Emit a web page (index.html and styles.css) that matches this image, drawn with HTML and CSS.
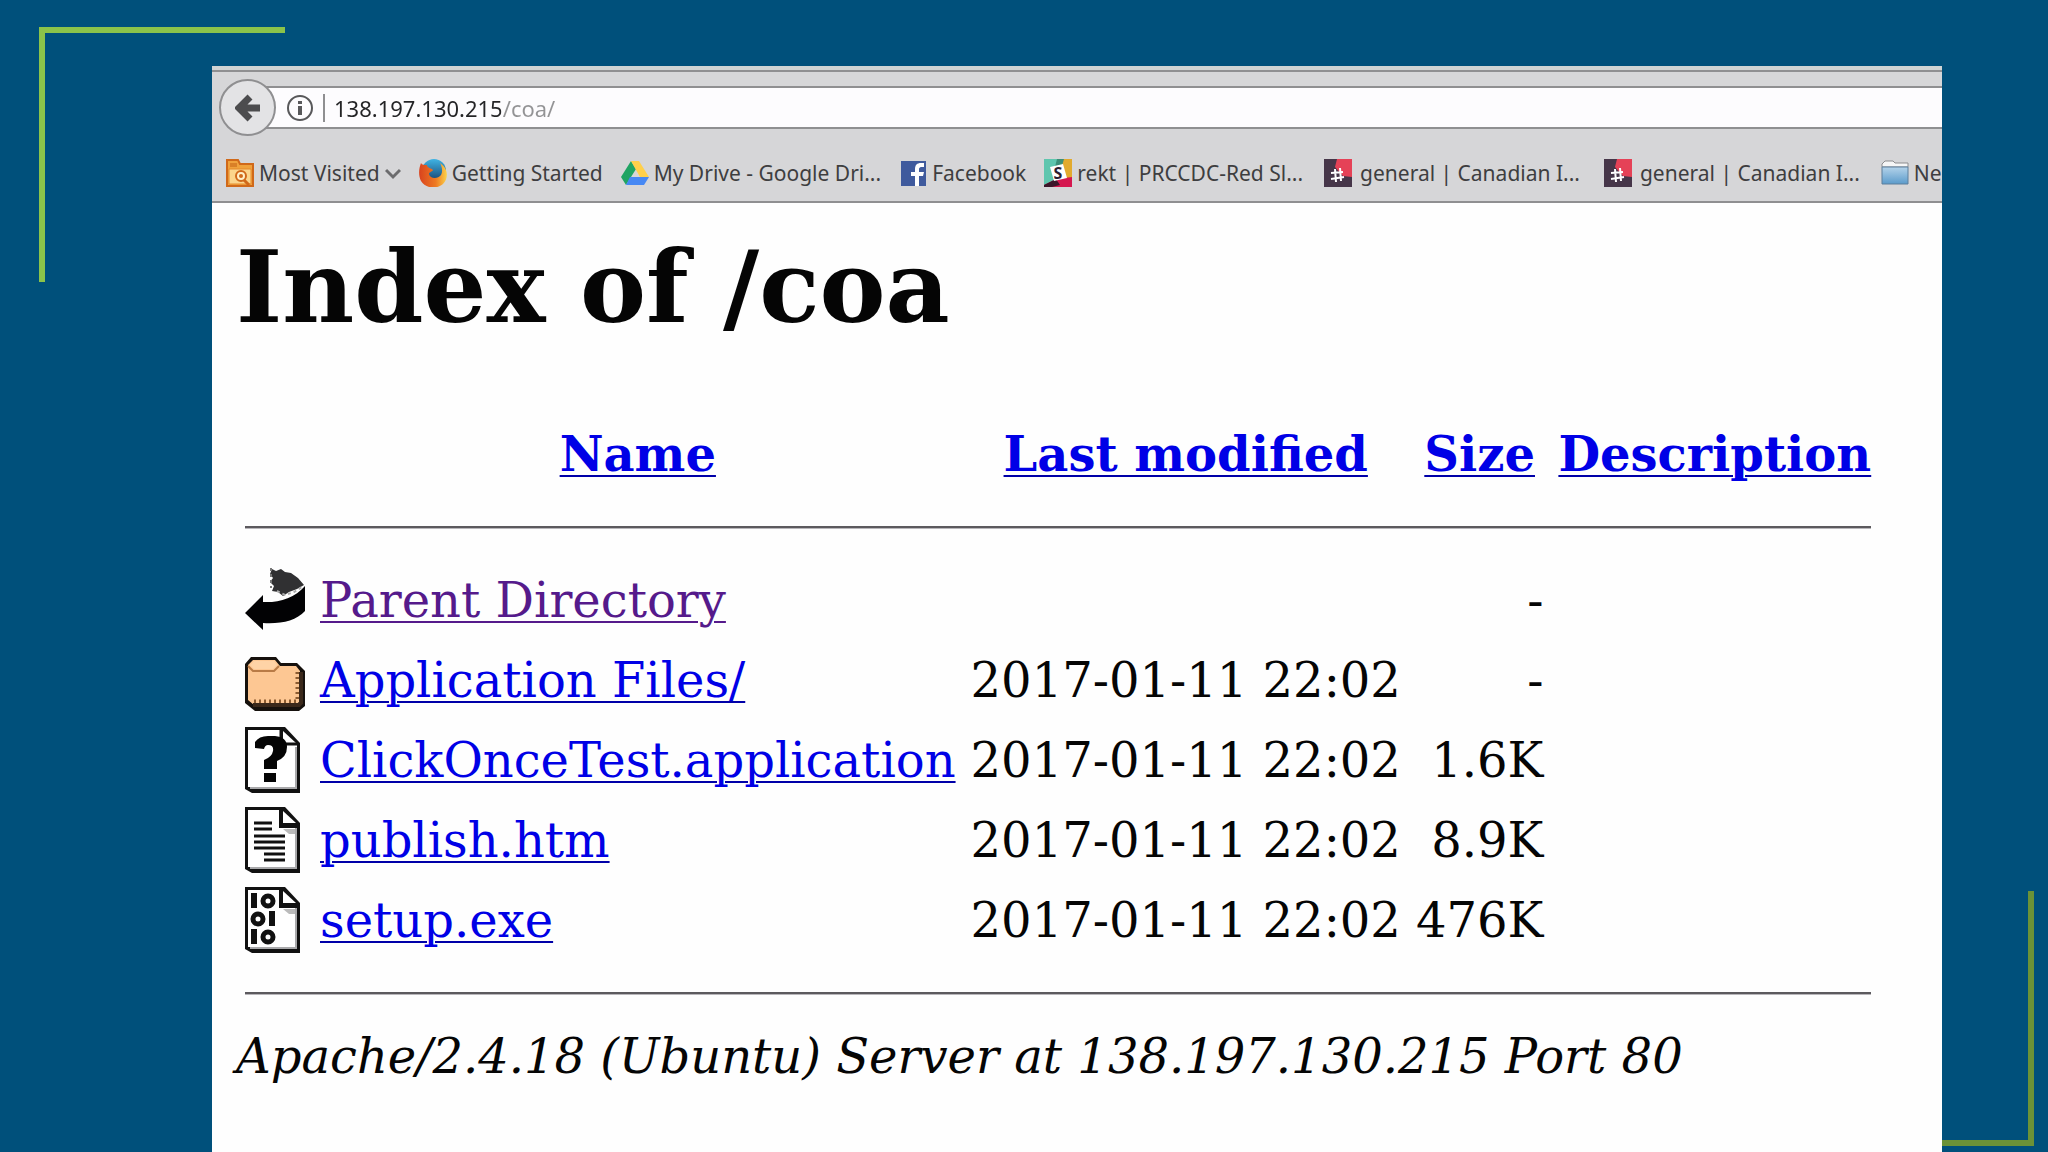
FILE: index.html
```html
<!DOCTYPE html>
<html lang="en">
<head>
  <meta charset="UTF-8">
  <meta name="viewport" content="width=device-width, initial-scale=1.0">
  <title>Index of /coa</title>
  <link rel="stylesheet" href="styles.css">
</head>
<body>
  <div class="slide">
    <div class="corner corner-top"></div>
    <div class="corner corner-bottom"></div>

    <div class="browser">
      <!-- Toolbar -->
      <div class="toolbar">
        <div class="nav-bar">
          <button class="back-button" aria-label="Back">
            <svg width="26" height="28" viewBox="0 0 26 28"><path d="M15 3 L4 14 L15 25 M5 14 H25" fill="none" stroke="#4c4c4e" stroke-width="7"/></svg>
          </button>
          <div class="url-bar">
            <svg class="info-icon" width="26" height="26" viewBox="0 0 26 26">
              <circle cx="13" cy="13" r="12" fill="none" stroke="#58585a" stroke-width="2"/>
              <path d="M11 6h4v3h-4z M11 11h4v9h-4z" fill="#58585a"/>
            </svg>
            <input class="url-input" type="text" aria-label="Address" value="138.197.130.215/coa/">
          </div>
        </div>

        <!-- Bookmarks -->
        <nav class="bookmarks">
          <a class="bookmark" href="#">
            <svg width="28" height="28" viewBox="0 0 28 28">
              <path d="M1 27V1h11l2 4h13v22z" fill="#f0a23c" stroke="#d0691a" stroke-width="2"/>
              <path d="M4 4h7v4H4z" fill="#d98027"/>
              <path d="M3 10h22v15H3z" fill="#fbd58c" stroke="#e58a2c"/>
              <circle cx="15" cy="17" r="5" fill="#fff0c8" stroke="#d0691a" stroke-width="2"/>
              <circle cx="15" cy="17" r="2" fill="#d0691a"/>
              <path d="M18 21l5 5" stroke="#d0691a" stroke-width="3"/>
            </svg>
            <span>Most Visited</span>
            <svg width="16" height="28" viewBox="0 0 16 28"><path d="M1 11l7 7 7-7" fill="none" stroke="#6c6c6e" stroke-width="3"/></svg>
          </a>
          <a class="bookmark" href="#">
            <svg width="28" height="28" viewBox="0 0 28 28">
              <defs>
                <linearGradient id="fox" x1="0" y1="0" x2="1" y2="0">
                  <stop offset="0" stop-color="#d9431e"/>
                  <stop offset="0.6" stop-color="#ee7a22"/>
                  <stop offset="1" stop-color="#fbd24a"/>
                </linearGradient>
                <linearGradient id="globe" x1="0" y1="0" x2="0" y2="1">
                  <stop offset="0" stop-color="#3fb4e4"/>
                  <stop offset="1" stop-color="#143a68"/>
                </linearGradient>
              </defs>
              <circle cx="15" cy="12" r="12" fill="url(#globe)"/>
              <path d="M2 4c1 2 3 2 6 2 0 3 4 3 6 5-1 2-4 2-4 4 1 5 9 5 12 1 2-4 1-8-1-12 8 5 9 15 3 21-7 6-18 4-22-3C-1 16 0 9 2 4z" fill="url(#fox)"/>
            </svg>
            <span>Getting Started</span>
          </a>
          <a class="bookmark" href="#">
            <svg width="28" height="28" viewBox="0 0 28 28">
              <path d="M10 2l5 8L5 26 0 18z" fill="#1fa463"/>
              <path d="M10 2h8l10 16h-9z" fill="#ffd04b"/>
              <path d="M9 18h19l-5 8H5z" fill="#4688f4"/>
            </svg>
            <span>My Drive - Google Dri...</span>
          </a>
          <a class="bookmark" href="#">
            <svg width="28" height="28" viewBox="0 0 28 28">
              <path d="M2 2h25v25H2z" fill="#3f5a9d"/>
              <path d="M16 27V17h-4v-4h4v-3c0-4 2-6 6-6h3v4h-3c-1 0-2 1-2 2v3h5l-1 4h-4v10z" fill="#fff"/>
            </svg>
            <span>Facebook</span>
          </a>
          <a class="bookmark" href="#">
            <svg width="28" height="28" viewBox="0 0 28 28">
              <path d="M0 0h18l-6 28H0z" fill="#5fc6ae"/>
              <path d="M17 0h11v20h-8z" fill="#e2aa2e"/>
              <path d="M13 0h7l-2 7-7 1z" fill="#3c8f78"/>
              <path d="M12 20l16-2v10H0v-2z" fill="#d5174f"/>
              <path d="M0 26l12-6 4 6-8 2H0z" fill="#3a1629"/>
              <path d="M6 8l13-3 4 14-13 3z" fill="#fff"/>
              <text x="14" y="20" text-anchor="middle" class="slack-letter">S</text>
            </svg>
            <span>rekt | PRCCDC-Red Sl...</span>
          </a>
          <a class="bookmark bookmark-wide" href="#">
            <svg width="28" height="28" viewBox="0 0 28 28">
              <path d="M0 0h28v28H0z" fill="#463649"/>
              <path d="M13 0h15v18l-9-1-8-9z" fill="#e54257"/>
              <path d="M11 10l1 13M16 9l1 13M7 14l12-1M7 20l13-2" fill="none" stroke="#fff" stroke-width="2"/>
            </svg>
            <span>general | Canadian I...</span>
          </a>
          <a class="bookmark bookmark-wide" href="#">
            <svg width="28" height="28" viewBox="0 0 28 28">
              <path d="M0 0h28v28H0z" fill="#463649"/>
              <path d="M13 0h15v18l-9-1-8-9z" fill="#e54257"/>
              <path d="M11 10l1 13M16 9l1 13M7 14l12-1M7 20l13-2" fill="none" stroke="#fff" stroke-width="2"/>
            </svg>
            <span>general | Canadian I...</span>
          </a>
          <a class="bookmark" href="#">
            <svg width="28" height="28" viewBox="0 0 28 28">
              <defs>
                <linearGradient id="folder" x1="0" y1="0" x2="0" y2="1">
                  <stop offset="0" stop-color="#b4d3ea"/>
                  <stop offset="1" stop-color="#5b9bcb"/>
                </linearGradient>
              </defs>
              <path d="M1 8V5l3-3h8l2 2h13v4z" fill="#f6f6f6" stroke="#8d8d8f"/>
              <path d="M1 8h26v17H1z" fill="url(#folder)" stroke="#5c7f9c"/>
            </svg>
            <span>Ne</span>
          </a>
        </nav>
      </div>

      <!-- Directory listing -->
      <main class="listing">
        <h1>Index of /coa</h1>
        <table>
          <thead>
            <tr>
              <th class="icon-cell"></th>
              <th><a href="#">Name</a></th>
              <th><a href="#">Last modified</a></th>
              <th><a href="#">Size</a></th>
              <th><a href="#">Description</a></th>
            </tr>
            <tr class="rule"><td colspan="5"><hr></td></tr>
          </thead>
          <tbody>
            <tr>
              <td class="icon-cell">
                <svg width="60" height="66" viewBox="0 0 60 66">
                  <path d="M27 2l4 2 5-2 4 3 6 1 7 5 6 7-7 4-8 3-6 4-5-4-6-1 2-5-4-4 3-4-3-4z" fill="#303032"/>
                  <path d="M26 1v20" stroke="#777" stroke-width="2" stroke-dasharray="3 3"/>
                  <path d="M32 24l8 4 9-3 8-5" fill="none" stroke="#aaa" stroke-width="2" stroke-dasharray="3 3"/>
                  <path d="M0 46L18 28v7c15 1 32-4 42-16v25c-9 10-24 13-42 12v7z" fill="#020204"/>
                </svg>
              </td>
              <td><a class="visited" href="#">Parent Directory</a></td>
              <td></td>
              <td class="size">-</td>
              <td></td>
            </tr>
            <tr>
              <td class="icon-cell">
                <svg width="60" height="66" viewBox="0 0 60 66">
                  <path d="M0 17l6-7h25l5 6h16l8 8v35l-6 5H10L0 56z" fill="#16110d"/>
                  <path d="M3 18l5-5h22l5 6h16l4 5v30l-4 4H9l-6-5z" fill="#fdc793"/>
                  <path d="M3 19l5 5h21l5-5" fill="none" stroke="#b97b46" stroke-width="2"/>
                  <path d="M9 14h20l3 4-4 4H9l-4-4z" fill="#ffd3a6"/>
                  <path d="M9 55h44" stroke="#8a5b31" stroke-width="5" stroke-dasharray="2 3"/>
                  <path d="M53 25v30" stroke="#8a5b31" stroke-width="5" stroke-dasharray="2 3"/>
                  <path d="M8 58h46l2-2V25" fill="none" stroke="#3b291b" stroke-width="4"/>
                </svg>
              </td>
              <td><a href="#">Application Files/</a></td>
              <td>2017-01-11 22:02</td>
              <td class="size">-</td>
              <td></td>
            </tr>
            <tr>
              <td class="icon-cell">
                <svg width="60" height="66" viewBox="0 0 60 66">
                  <path d="M0 0h40l15 16v50H7l-7-4z" fill="#111"/>
                  <path d="M3 3h33v15h16v42H3z" fill="#fff"/>
                  <path d="M5 61h46V20" fill="none" stroke="#a9a9ab" stroke-width="2"/>
                  <path d="M38 4l13 12H38z" fill="#fff"/>
                  <path d="M36 2v15h17" fill="none" stroke="#111" stroke-width="3"/>
                  <path d="M10 21v-6q4-6 13-6h7q12 1 12 11t-10 14v8H19v-9q8-3 9-9t-5-6q-3 0-4 4z" fill="#050505"/>
                  <path d="M19 46h12v9H19z" fill="#050505"/>
                </svg>
              </td>
              <td><a href="#">ClickOnceTest.application</a></td>
              <td>2017-01-11 22:02</td>
              <td class="size">1.6K</td>
              <td></td>
            </tr>
            <tr>
              <td class="icon-cell">
                <svg width="60" height="66" viewBox="0 0 60 66">
                  <path d="M0 0h40l15 16v50H7l-7-4z" fill="#111"/>
                  <path d="M3 3h33v15h16v42H3z" fill="#fff"/>
                  <path d="M5 61h46V20" fill="none" stroke="#a9a9ab" stroke-width="2"/>
                  <path d="M38 4l13 12H38z" fill="#fff"/>
                  <path d="M36 2v17h17" fill="none" stroke="#111" stroke-width="4"/>
                  <path d="M38 22h12v5h-6z" fill="#bbb"/>
                  <path d="M9 16h18M9 22h18M9 29h31M9 35h31M9 41h31M19 47h21M19 53h21" fill="none" stroke="#111" stroke-width="3"/>
                </svg>
              </td>
              <td><a href="#">publish.htm</a></td>
              <td>2017-01-11 22:02</td>
              <td class="size">8.9K</td>
              <td></td>
            </tr>
            <tr>
              <td class="icon-cell">
                <svg width="60" height="66" viewBox="0 0 60 66">
                  <path d="M0 0h40l15 16v50H7l-7-4z" fill="#111"/>
                  <path d="M3 3h33v15h16v42H3z" fill="#fff"/>
                  <path d="M5 61h46V20" fill="none" stroke="#a9a9ab" stroke-width="2"/>
                  <path d="M38 4l13 12H38z" fill="#fff"/>
                  <path d="M36 2v17h17" fill="none" stroke="#111" stroke-width="4"/>
                  <path d="M38 22h12v5h-6z" fill="#bbb"/>
                  <path d="M9 6v15M27 24v15M9 42v15" stroke="#111" stroke-width="6"/>
                  <g fill="none" stroke="#111" stroke-width="5">
                    <ellipse cx="23" cy="14" rx="5" ry="5"/>
                    <ellipse cx="13" cy="32" rx="5" ry="5"/>
                    <ellipse cx="23" cy="50" rx="5" ry="5"/>
                  </g>
                </svg>
              </td>
              <td><a href="#">setup.exe</a></td>
              <td>2017-01-11 22:02</td>
              <td class="size">476K</td>
              <td></td>
            </tr>
            <tr class="rule"><td colspan="5"><hr></td></tr>
          </tbody>
        </table>
        <address>Apache/2.4.18 (Ubuntu) Server at 138.197.130.215 Port 80</address>
      </main>
    </div>
  </div>
</body>
</html>
```
FILE: styles.css
```css
/* General Styles */
* {
  box-sizing: border-box;
}

body {
  margin: 0;
  background-color: #00507b;
  color: #050505;
  font-family: "DejaVu Serif", serif;
}

.slide {
  position: relative;
  height: 100vh;
  padding: 66px 106px 0 212px;
  overflow: hidden;
}

/* Corner brackets */
.corner {
  position: absolute;
  width: 246px;
  height: 255px;
}

.corner-top {
  top: 27px;
  left: 39px;
  border-top: 6px solid #8bc34a;
  border-left: 6px solid #8bc34a;
}

.corner-bottom {
  right: 14px;
  bottom: 6px;
  border-right: 6px solid #6b9237;
  border-bottom: 6px solid #6b9237;
}

.browser {
  position: relative;
  height: 100%;
  background-color: #fefefe;
  overflow: hidden;
}

/* Toolbar */
.toolbar {
  background-color: #d6d6d8;
  border-top: 4px solid #d0d4d4;
  border-bottom: 2px solid #8f8f91;
  font-family: "Noto Sans", sans-serif;
  font-size: 21px;
}

.nav-bar {
  display: flex;
  align-items: center;
  height: 73px;
  padding-left: 7px;
  border-top: 2px solid #8f8f91;
}

.back-button {
  display: flex;
  align-items: center;
  justify-content: center;
  z-index: 1;
  width: 57px;
  height: 57px;
  padding: 0;
  background-color: #e3e3e5;
  border: 2px solid #8f8f91;
  border-radius: 50%;
}

.url-bar {
  display: flex;
  flex: 1;
  align-items: center;
  height: 43px;
  margin-left: -10px;
  padding-left: 21px;
  background-color: #fdfcfe;
  border-top: 2px solid #8f8f91;
  border-bottom: 2px solid #8f8f91;
}

.info-icon {
  margin-right: 10px;
}

.url-input {
  flex: 1;
  height: 28px;
  padding: 0 0 0 9px;
  border: none;
  border-left: 2px solid #8f8f91;
  outline: none;
  /* host part dark, path part grey */
  background: linear-gradient(90deg, #242426 176px, #939395 176px);
  -webkit-background-clip: text;
  background-clip: text;
  color: transparent;
  font-family: inherit;
  font-size: 22px;
}

/* Bookmarks */
.bookmarks {
  display: flex;
  align-items: center;
  gap: 18px;
  height: 58px;
  padding: 1px 0 0 14px;
}

.bookmark {
  display: flex;
  flex-shrink: 0;
  align-items: center;
  gap: 5px;
  color: #3e3e40;
  text-decoration: none;
  white-space: nowrap;
}

.bookmark-wide {
  gap: 8px;
  margin: 0 3px;
}

.slack-letter {
  font-size: 16px;
  font-weight: bold;
  fill: #2b1d30;
}

/* Directory listing */
.listing {
  padding: 28px 24px;
  font-size: 48px;
}

h1 {
  margin: 0 0 71px;
  font-size: 99px;
  line-height: 112px;
}

table {
  border-spacing: 0;
  margin-left: 2px;
}

th,
td {
  height: 80px;
  padding: 0 8px 0 7px;
  line-height: 56px;
  white-space: nowrap;
}

.icon-cell svg {
  display: block;
}

.size {
  text-align: right;
}

.rule td {
  height: 66px;
}

hr {
  margin: 0;
  border: none;
  border-top: 2px solid #5c5a5e;
  border-bottom: 1px solid #b8b6ba;
}

.listing a {
  color: #0000e6;
  text-decoration-color: #0000a8;
  text-decoration-thickness: 2px;
  text-underline-offset: 4px;
}

.listing a.visited {
  color: #551a8b;
  text-decoration-color: #551a8b;
}

address {
  padding-top: 2px;
  line-height: 56px;
  white-space: nowrap;
}
```
